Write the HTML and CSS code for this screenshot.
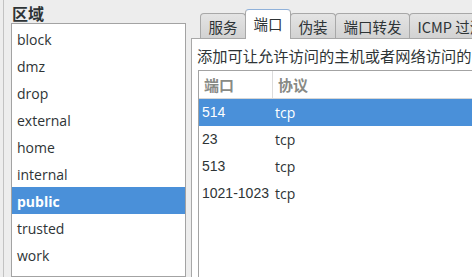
FILE: index.html
```html
<!DOCTYPE html>
<html>
<head>
<meta charset="utf-8">
<link rel="stylesheet" href="styles.css">
</head>
<body>
<div class="app">
  <div class="side">
    <div class="side-title">区域</div>
    <div class="zone-list">
      <div class="zone">block</div>
      <div class="zone">dmz</div>
      <div class="zone">drop</div>
      <div class="zone">external</div>
      <div class="zone">home</div>
      <div class="zone">internal</div>
      <div class="zone selected">public</div>
      <div class="zone">trusted</div>
      <div class="zone">work</div>
    </div>
  </div>
  <div class="main">
    <div class="tabs">
      <div class="tab">服务</div>
      <div class="tab active">端口</div>
      <div class="tab">伪装</div>
      <div class="tab">端口转发</div>
      <div class="tab">ICMP 过滤器</div>
    </div>
    <div class="panel">
      <div class="desc">添加可让允许访问的主机或者网络访问的附加端口或者端口范围。</div>
      <div class="table">
        <div class="row head">
          <div class="c1">端口</div>
          <div class="c2">协议</div>
        </div>
        <div class="row selected"><div class="c1 num">514</div><div class="c2">tcp</div></div>
        <div class="row"><div class="c1 num">23</div><div class="c2">tcp</div></div>
        <div class="row"><div class="c1 num">513</div><div class="c2">tcp</div></div>
        <div class="row"><div class="c1 num">1021-1023</div><div class="c2">tcp</div></div>
      </div>
    </div>
  </div>
</div>
</body>
</html>
```

FILE: styles.css
```css
html, body {
  margin: 0;
  padding: 0;
  width: 472px;
  height: 277px;
  overflow: hidden;
  background: #ededed;
  font-family: "Open Sans", "Noto Sans CJK SC", sans-serif;
  color: #2e3436;
}

.app {
  display: flex;
  height: 277px;
}

.side {
  margin-left: 3px;
  border-left: 1px solid #c2c2c2;
  width: 182px;
  flex: none;
  display: flex;
  flex-direction: column;
}

.side-title {
  font-family: "Noto Sans CJK SC", sans-serif;
  font-weight: bold;
  font-size: 16px;
  line-height: 20px;
  padding: 3px 0 0 8px;
  height: 22px;
  color: #2e3436;
}

.zone-list {
  margin-left: 7px;
  width: 173px;
  border: 1px solid #a3a3a3;
  background: #fff;
  height: 300px;
  padding-top: 1px;
}

.zone {
  height: 27px;
  line-height: 29px;
  padding-left: 5px;
  font-size: 14px;
}

.zone.selected {
  background: #4a90d9;
  color: #fff;
  font-weight: bold;
}

.main {
  margin-left: 5px;
  flex: 1;
  display: flex;
  flex-direction: column;
  min-width: 0;
}

.tabs {
  display: flex;
  align-items: flex-end;
  height: 38px;
  padding-left: 9px;
  white-space: nowrap;
  position: relative;
  z-index: 1;
}

.tab {
  flex: none;
  height: 24px;
  line-height: 25px;
  padding: 0 7.5px;
  font-family: "Noto Sans CJK SC", sans-serif;
  font-size: 14.5px;
  color: #2e3436;
  border: 1px solid #a8a8a8;
  border-bottom: none;
  border-radius: 4px 4px 0 0;
  background: linear-gradient(#e4e4e4, #d2d2d2);
  margin-right: -1px;
}

.tab.active {
  height: 29px;
  line-height: 27px;
  background: #fff;
  border-color: #a8a8a8;
  border-top-color: #8fb1da;
  margin-bottom: -1px;
}

.panel {
  flex: 1;
  border-left: 1px solid #a8a8a8;
  border-top: 1px solid #a8a8a8;
  background: #fff;
  padding: 6px 0 0 6px;
  display: flex;
  flex-direction: column;
}

.desc {
  font-family: "Noto Sans CJK SC", sans-serif;
  font-size: 15.25px;
  line-height: 20px;
  margin-left: -1px;
  white-space: nowrap;
  height: 25px;
}

.table {
  border-left: 1px solid #a3a3a3;
  border-top: 1px solid #a3a3a3;
  flex: 1;
  background: #fff;
}

.row {
  display: flex;
  height: 27px;
  line-height: 27px;
  font-size: 14px;
}

.row.head {
  border-bottom: 1px solid #d6d6d6;
  color: #888a85;
  font-family: "Noto Sans CJK SC", sans-serif;
  font-size: 15px;
  font-weight: bold;
}

.row.head .c1 {
  padding-left: 5px;
  border-right: 1px solid #dcdcdc;
  width: 68px;
}

.row.head .c2 {
  padding-left: 5px;
}

.row.selected {
  background: #4a90d9;
  color: #fff;
}

.c1 {
  width: 71px;
  padding-left: 3px;
  flex: none;
}

.c2 {
  padding-left: 2px;
}

.num {
  font-family: "Liberation Sans", sans-serif;
}
```
